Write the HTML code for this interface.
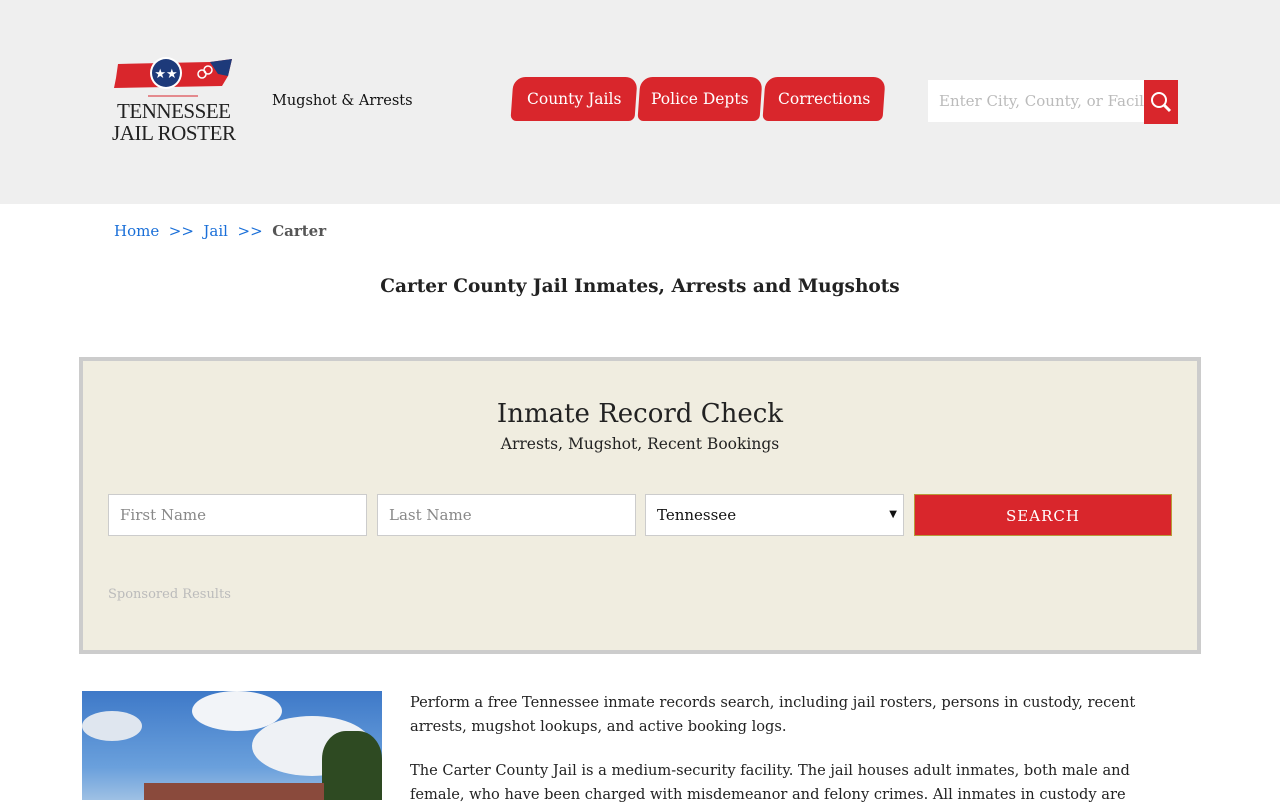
<!DOCTYPE html>
<html><head><meta charset="utf-8">
<style>
*{box-sizing:border-box;margin:0;padding:0}
body{width:1280px;height:800px;overflow:hidden;background:#fff;font-family:"DejaVu Serif","Liberation Serif",serif;color:#222}
.header{position:absolute;left:0;top:0;width:1280px;height:204px;background:#efefef}
.logo{position:absolute;left:110px;top:56px;width:130px;height:92px}
.tag{position:absolute;left:272px;top:93px;font-size:14.5px;color:#111}
.nav{position:absolute;top:77px;height:44px;background:#d9262c;color:#fff;font-size:15.5px;border-radius:12px 12px 6px 6px;line-height:44px;text-align:center;transform:skewX(-4deg)}
.nav span{display:inline-block;transform:skewX(4deg)}
.sbox{position:absolute;left:928px;top:80px;width:216px;height:42px;background:#fff;color:#bbb;font-size:15px;line-height:42px;padding-left:11px;white-space:nowrap;overflow:hidden}
.sbtn{position:absolute;left:1144px;top:80px;width:34px;height:44px;background:#d9262c}
.bc{position:absolute;left:114px;top:222px;font-size:15px;color:#1a6fd8;white-space:pre}
.bc b{color:#555}
h1{position:absolute;left:0;width:1280px;top:276px;text-align:center;font-size:18.5px;font-weight:bold;color:#222}
.box{position:absolute;left:79px;top:357px;width:1122px;height:297px;background:#f0ede0;border:4px solid #ccc}
.box h2{position:absolute;top:38px;width:100%;text-align:center;font-weight:normal;font-size:26px;color:#222}
.box .sub{position:absolute;top:74px;width:100%;text-align:center;font-size:15.5px;color:#222}
.inp{position:absolute;top:133px;height:42px;width:259px;background:#fff;border:1px solid #ccc;color:#888;font-size:15px;line-height:40px;padding-left:11px}
.go{position:absolute;left:831px;top:133px;width:258px;height:42px;background:#d9262c;border:1px solid #b89a3a;color:#fff;font-size:15px;letter-spacing:1px;text-align:center;line-height:42px}
.spons{position:absolute;left:25px;top:226px;font-size:13px;color:#bbb}
.img{position:absolute;left:82px;top:691px;width:300px;height:109px;background:linear-gradient(#3e79c8,#6aa0dc 70%,#9ec0e4);overflow:hidden}
p{position:absolute;left:410px;width:760px;font-size:14.6px;line-height:24px;color:#222}
</style></head><body>
<div class="header">
<svg class="logo" viewBox="0 0 130 92">
<path d="M8 8 L100 6 L122 3 L118 20 L112 30 L4 32 L6 22 Z" fill="#d9262c"/>
<path d="M100 6 L122 3 L118 20 L108 18 Z" fill="#1d3a7a"/>
<circle cx="56" cy="17" r="16" fill="#fff"/><circle cx="56" cy="17" r="14" fill="#1d3a7a"/>
<text x="56" y="22" font-size="13" fill="#fff" text-anchor="middle">★★</text>
<circle cx="92" cy="18" r="4" fill="none" stroke="#fff" stroke-width="1.5"/><circle cx="98" cy="14" r="4" fill="none" stroke="#fff" stroke-width="1.5"/>
<line x1="38" y1="40" x2="88" y2="40" stroke="#d9262c" stroke-width="1"/>
<text x="64" y="62" font-family="Liberation Serif,serif" font-size="21" text-anchor="middle" fill="#222" textLength="114">TENNESSEE</text>
<text x="64" y="84" font-family="Liberation Serif,serif" font-size="21" text-anchor="middle" fill="#222" textLength="124">JAIL ROSTER</text>
</svg>
<div class="tag">Mugshot &amp; Arrests</div>
<div class="nav" style="left:512px;width:124px"><span>County Jails</span></div>
<div class="nav" style="left:639px;width:122px"><span>Police Depts</span></div>
<div class="nav" style="left:764px;width:120px"><span>Corrections</span></div>
<div class="sbox">Enter City, County, or Facil</div>
<div class="sbtn"><svg width="34" height="44" viewBox="0 0 34 44"><circle cx="15" cy="20" r="7" fill="none" stroke="#fff" stroke-width="2"/><line x1="20" y1="25" x2="26" y2="31" stroke="#fff" stroke-width="3"/></svg></div>
</div>
<div class="bc">Home  &gt;&gt;  Jail  &gt;&gt;  <b>Carter</b></div>
<h1>Carter County Jail Inmates, Arrests and Mugshots</h1>
<div class="box">
<h2>Inmate Record Check</h2>
<div class="sub">Arrests, Mugshot, Recent Bookings</div>
<div class="inp" style="left:25px">First Name</div>
<div class="inp" style="left:294px">Last Name</div>
<div class="inp" style="left:562px;color:#111;">Tennessee<span style="position:absolute;right:6px;font-size:10px">▼</span></div>
<div class="go">SEARCH</div>
<div class="spons">Sponsored Results</div>
</div>
<div class="img">
<div style="position:absolute;left:110px;top:0;width:90px;height:40px;background:#f2f4f8;border-radius:50%"></div>
<div style="position:absolute;left:170px;top:25px;width:120px;height:60px;background:#eef1f5;border-radius:50%"></div>
<div style="position:absolute;left:0;top:20px;width:60px;height:30px;background:#dfe6ef;border-radius:50%"></div>
<div style="position:absolute;left:240px;top:40px;width:60px;height:70px;background:#2e4a22;border-radius:40% 40% 0 0"></div>
<div style="position:absolute;left:62px;top:92px;width:180px;height:20px;background:#8a4a3c"></div>
</div>
<p style="top:691px">Perform a free Tennessee inmate records search, including jail rosters, persons in custody, recent arrests, mugshot lookups, and active booking logs.</p>
<p style="top:759px">The Carter County Jail is a medium-security facility. The jail houses adult inmates, both male and female, who have been charged with misdemeanor and felony crimes. All inmates in custody are</p>
</body></html>
